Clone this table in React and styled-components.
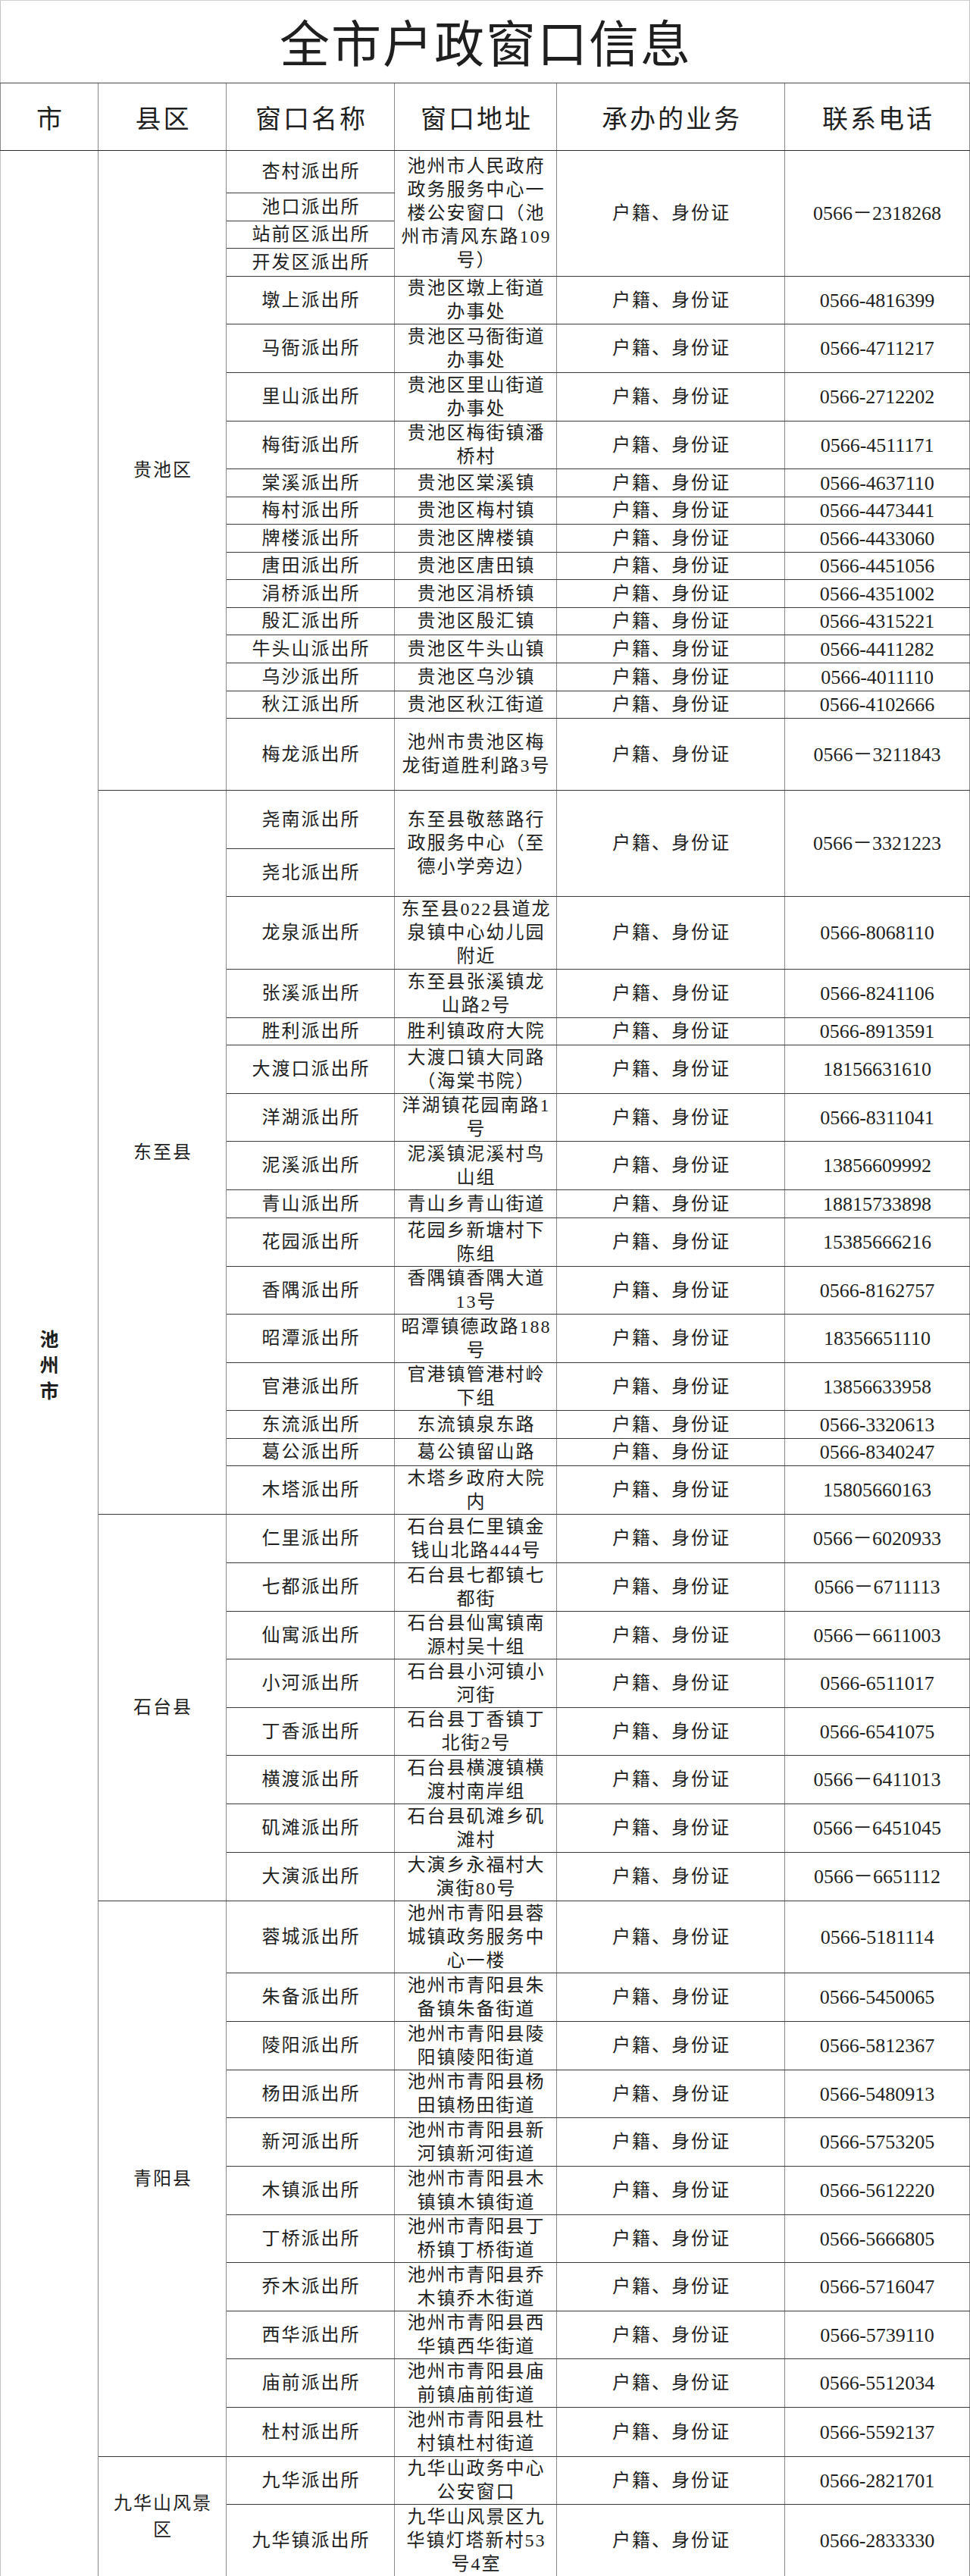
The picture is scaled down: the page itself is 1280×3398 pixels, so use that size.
import React from 'react';
import styled, { createGlobalStyle } from 'styled-components';

const GlobalStyle = createGlobalStyle`
  html, body {
    margin: 0;
    padding: 0;
    background: #fff;
  }
  body {
    font-family: "Liberation Serif", "Noto Sans CJK SC", serif;
    color: #1f1f1f;
  }
`;

const CJK = `"Noto Sans CJK SC", "Noto Sans", sans-serif`;

const Sheet = styled.table`
  width: 1279px;
  border-collapse: collapse;
  table-layout: fixed;
`;

const Col = styled.col`
  width: ${(p) => p.$w}px;
`;

const TitleCell = styled.td`
  height: 104px;
  padding: 0 0 4px 2px;
  text-align: center;
  font-family: ${CJK};
  font-size: 66px;
  letter-spacing: 2px;
  line-height: 1;
  border-top: 1px solid #cfcfcf;
  border-left: 1px solid #c4c4c4;
  border-right: 1px solid #c4c4c4;
  border-bottom: 1px solid #4a4a4a;
`;

const HeadRow = styled.tr`
  height: 89px;
`;

const HeadCell = styled.th`
  padding: 0 0 0 3px;
  font-family: ${CJK};
  font-weight: 400;
  font-size: 34px;
  letter-spacing: 3px;
  text-align: center;
  vertical-align: middle;
  border-left: 1px solid #8a8a8a;
  border-right: 1px solid #8a8a8a;
  border-bottom: 1px solid #2e2e2e;
`;

const Row = styled.tr`
  height: ${(p) => p.$h}px;
`;

const Cell = styled.td`
  padding: 0 0 0 2px;
  font-size: 24px;
  letter-spacing: 2px;
  line-height: 31px;
  text-align: center;
  vertical-align: middle;
  white-space: pre;
  overflow: visible;
  border-top: 1px solid #3a3a3a;
  border-bottom: 1px solid #3a3a3a;
  border-left: 1px solid #8a8a8a;
  border-right: 1px solid #8a8a8a;
`;

const CityCell = styled(Cell)`
  font-family: ${CJK};
  font-weight: 700;
  font-size: 25px;
  letter-spacing: 0;
  line-height: 34px;
  padding: 0;
  border-left-color: #c4c4c4;
`;

const CountyCell = styled(Cell)`
  line-height: 35px;
`;

const PhoneCell = styled(Cell)`
  font-size: 26px;
  letter-spacing: 0;
  padding: 0;
  border-right-color: #8a8a8a;
`;

const r = (names, hs, addr, phone) => ({ names, hs, addr, phone });
const one = (name, h, addr, phone) => r([name], [h], addr, phone);

const districts = [
  {
    name: '贵池区',
    entries: [
      r(
        ['杏村派出所', '池口派出所', '站前区派出所', '开发区派出所'],
        [56, 37, 36, 37],
        '池州市人民政府\n政务服务中心一\n楼公安窗口（池\n州市清风东路109\n号）',
        '0566－2318268'
      ),
      one('墩上派出所', 63, '贵池区墩上街道\n办事处', '0566-4816399'),
      one('马衙派出所', 64, '贵池区马衙街道\n办事处', '0566-4711217'),
      one('里山派出所', 64, '贵池区里山街道\n办事处', '0566-2712202'),
      one('梅街派出所', 63, '贵池区梅街镇潘\n桥村', '0566-4511171'),
      one('棠溪派出所', 37, '贵池区棠溪镇', '0566-4637110'),
      one('梅村派出所', 36, '贵池区梅村镇', '0566-4473441'),
      one('牌楼派出所', 37, '贵池区牌楼镇', '0566-4433060'),
      one('唐田派出所', 36, '贵池区唐田镇', '0566-4451056'),
      one('涓桥派出所', 37, '贵池区涓桥镇', '0566-4351002'),
      one('殷汇派出所', 36, '贵池区殷汇镇', '0566-4315221'),
      one('牛头山派出所', 37, '贵池区牛头山镇', '0566-4411282'),
      one('乌沙派出所', 37, '贵池区乌沙镇', '0566-4011110'),
      one('秋江派出所', 36, '贵池区秋江街道', '0566-4102666'),
      one('梅龙派出所', 95, '池州市贵池区梅\n龙街道胜利路3号', '0566－3211843'),
    ],
  },
  {
    name: '东至县',
    entries: [
      r(
        ['尧南派出所', '尧北派出所'],
        [77, 63],
        '东至县敬慈路行\n政服务中心（至\n德小学旁边）',
        '0566－3321223'
      ),
      one('龙泉派出所', 96, '东至县022县道龙\n泉镇中心幼儿园\n附近', '0566-8068110'),
      one('张溪派出所', 64, '东至县张溪镇龙\n山路2号', '0566-8241106'),
      one('胜利派出所', 36, '胜利镇政府大院', '0566-8913591'),
      one('大渡口派出所', 64, '大渡口镇大同路\n（海棠书院）', '18156631610'),
      one('洋湖派出所', 63, '洋湖镇花园南路1\n号', '0566-8311041'),
      one('泥溪派出所', 64, '泥溪镇泥溪村鸟\n山组', '13856609992'),
      one('青山派出所', 37, '青山乡青山街道', '18815733898'),
      one('花园派出所', 64, '花园乡新塘村下\n陈组', '15385666216'),
      one('香隅派出所', 63, '香隅镇香隅大道\n13号', '0566-8162757'),
      one('昭潭派出所', 64, '昭潭镇德政路188\n号', '18356651110'),
      one('官港派出所', 63, '官港镇管港村岭\n下组', '13856633958'),
      one('东流派出所', 37, '东流镇泉东路', '0566-3320613'),
      one('葛公派出所', 36, '葛公镇留山路', '0566-8340247'),
      one('木塔派出所', 64, '木塔乡政府大院\n内', '15805660163'),
    ],
  },
  {
    name: '石台县',
    entries: [
      one('仁里派出所', 64, '石台县仁里镇金\n钱山北路444号', '0566－6020933'),
      one('七都派出所', 64, '石台县七都镇七\n都街', '0566－6711113'),
      one('仙寓派出所', 63, '石台县仙寓镇南\n源村吴十组', '0566－6611003'),
      one('小河派出所', 64, '石台县小河镇小\n河街', '0566-6511017'),
      one('丁香派出所', 63, '石台县丁香镇丁\n北街2号', '0566-6541075'),
      one('横渡派出所', 64, '石台县横渡镇横\n渡村南岸组', '0566－6411013'),
      one('矶滩派出所', 64, '石台县矶滩乡矶\n滩村', '0566－6451045'),
      one('大演派出所', 64, '大演乡永福村大\n演街80号', '0566－6651112'),
    ],
  },
  {
    name: '青阳县',
    entries: [
      one('蓉城派出所', 95, '池州市青阳县蓉\n城镇政务服务中\n心一楼', '0566-5181114'),
      one('朱备派出所', 64, '池州市青阳县朱\n备镇朱备街道', '0566-5450065'),
      one('陵阳派出所', 64, '池州市青阳县陵\n阳镇陵阳街道', '0566-5812367'),
      one('杨田派出所', 63, '池州市青阳县杨\n田镇杨田街道', '0566-5480913'),
      one('新河派出所', 64, '池州市青阳县新\n河镇新河街道', '0566-5753205'),
      one('木镇派出所', 64, '池州市青阳县木\n镇镇木镇街道', '0566-5612220'),
      one('丁桥派出所', 63, '池州市青阳县丁\n桥镇丁桥街道', '0566-5666805'),
      one('乔木派出所', 64, '池州市青阳县乔\n木镇乔木街道', '0566-5716047'),
      one('西华派出所', 63, '池州市青阳县西\n华镇西华街道', '0566-5739110'),
      one('庙前派出所', 64, '池州市青阳县庙\n前镇庙前街道', '0566-5512034'),
      one('杜村派出所', 65, '池州市青阳县杜\n村镇杜村街道', '0566-5592137'),
    ],
  },
  {
    name: '九华山风景\n区',
    entries: [
      one('九华派出所', 63, '九华山政务中心\n公安窗口', '0566-2821701'),
      one('九华镇派出所', 95, '九华山风景区九\n华镇灯塔新村53\n号4室', '0566-2833330'),
    ],
  },
];

const countRows = (d) => d.entries.reduce((n, e) => n + e.names.length, 0);

function buildRows() {
  const total = districts.reduce((n, d) => n + countRows(d), 0);
  const rows = [];
  districts.forEach((d, di) => {
    let firstInDistrict = true;
    d.entries.forEach((e, ei) => {
      e.names.forEach((name, ni) => {
        rows.push(
          <Row key={`${di}-${ei}-${ni}`} $h={e.hs[ni]}>
            {di === 0 && ei === 0 && ni === 0 && (
              <CityCell rowSpan={total}>{'池\n州\n市'}</CityCell>
            )}
            {firstInDistrict && <CountyCell rowSpan={countRows(d)}>{d.name}</CountyCell>}
            <Cell>{name}</Cell>
            {ni === 0 && (
              <>
                <Cell rowSpan={e.names.length}>{e.addr}</Cell>
                <Cell rowSpan={e.names.length}>户籍、身份证</Cell>
                <PhoneCell rowSpan={e.names.length}>{e.phone}</PhoneCell>
              </>
            )}
          </Row>
        );
        firstInDistrict = false;
      });
    });
  });
  return rows;
}

export default function App() {
  return (
    <>
      <GlobalStyle />
      <Sheet>
        <colgroup>
          <Col $w={129} />
          <Col $w={169} />
          <Col $w={222} />
          <Col $w={214} />
          <Col $w={301} />
          <Col $w={244} />
        </colgroup>
        <tbody>
          <tr>
            <TitleCell colSpan={6}>全市户政窗口信息</TitleCell>
          </tr>
          <HeadRow>
            <HeadCell>市</HeadCell>
            <HeadCell>县区</HeadCell>
            <HeadCell>窗口名称</HeadCell>
            <HeadCell>窗口地址</HeadCell>
            <HeadCell>承办的业务</HeadCell>
            <HeadCell>联系电话</HeadCell>
          </HeadRow>
          {buildRows()}
        </tbody>
      </Sheet>
    </>
  );
}
